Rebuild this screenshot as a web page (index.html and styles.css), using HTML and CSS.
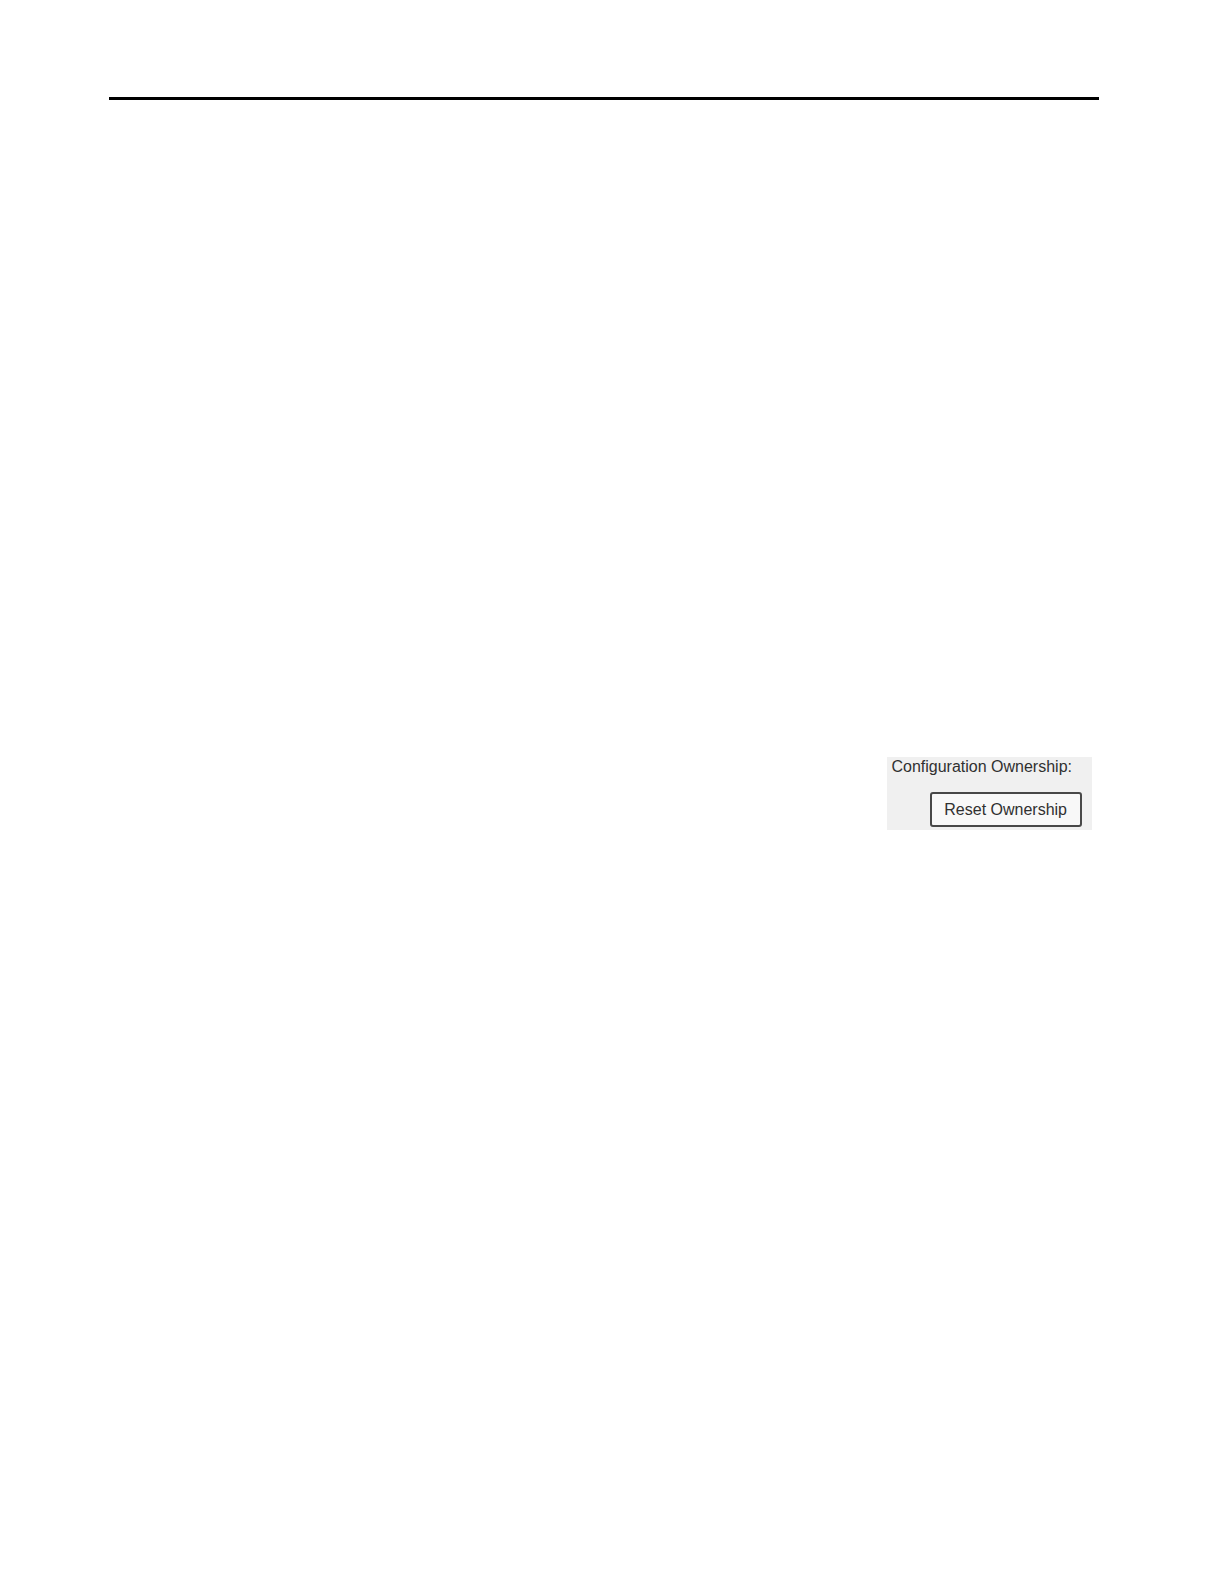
FILE: index.html
```html
<!DOCTYPE html>
<html lang="en">
<head>
    <meta charset="UTF-8">
    <meta name="viewport" content="width=device-width, initial-scale=1.0">
    <title>Configuration Ownership</title>
    <link rel="stylesheet" href="styles.css">
</head>
<body>
    <main class="page">
        <hr class="page-rule">
        <section class="ownership" aria-labelledby="ownership-title">
            <p class="ownership-title" id="ownership-title">Configuration Ownership:</p>
            <button class="reset-button" type="button">Reset Ownership</button>
        </section>
    </main>
</body>
</html>
```
FILE: styles.css
```css
body {
    font-family: "Liberation Sans", Arial, sans-serif;
    font-size: 16px;
    background-color: #ffffff;
    color: #303030;
    margin: 0;
}

.page {
    display: flex;
    flex-direction: column;
    padding: 97px 125px 97px 109px;
}

.page-rule {
    width: 100%;
    height: 3px;
    margin: 0;
    border: 0;
    background-color: #000000;
}

.ownership {
    display: flex;
    flex-direction: column;
    align-self: flex-end;
    gap: 16px;
    margin-top: 657px;
    margin-right: 7px;
    padding: 0 10px 3px 4px;
    background-color: #f0f0f0;
}

.ownership-title {
    margin: 0;
    padding-right: 10px;
    line-height: 19px;
}

.reset-button {
    align-self: flex-end;
    padding: 6px 13px 6px 12px;
    border: 2px solid #484848;
    border-radius: 3px;
    background-color: #f8f8f8;
    color: inherit;
    font: inherit;
    line-height: 19px;
}
```
